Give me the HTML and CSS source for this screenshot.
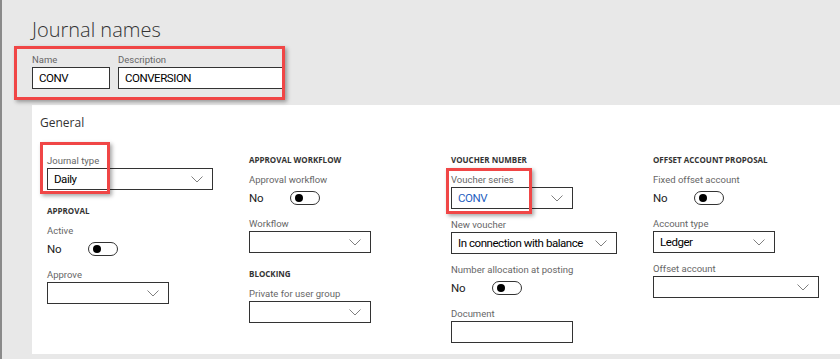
FILE: index.html
```html
<!DOCTYPE html>
<html lang="en">
<head>
  <meta charset="UTF-8">
  <title>Journal names</title>
  <link rel="stylesheet" href="styles.css">
</head>
<body>
  <div class="page">
    <h1 class="title">Journal names</h1>

    <div class="ident">
      <div class="field">
        <div class="lbl">Name</div>
        <div class="box w-name">CONV</div>
      </div>
      <div class="field">
        <div class="lbl">Description</div>
        <div class="box w-desc">CONVERSION</div>
      </div>
      <span class="mark mark-ident"></span>
    </div>

    <section class="panel">
      <h2 class="panel-title">General</h2>
      <div class="cols">

        <div class="col">
          <div class="field">
            <div class="lbl">Journal type</div>
            <div class="box dd w-wide"><span>Daily</span><svg class="chev" width="12" height="7" viewBox="0 0 12 7"><path d="M0.5 0.5l5.5 5.5 5.5-5.5"/></svg></div>
            <span class="mark mark-jtype"></span>
          </div>
          <div class="group">
            <h3 class="head">Approval</h3>
            <div class="field">
              <div class="lbl">Active</div>
              <div class="toggle-row"><span>No</span><span class="toggle"></span></div>
            </div>
            <div class="field">
              <div class="lbl">Approve</div>
              <div class="box dd w-std"><span></span><svg class="chev" width="12" height="7" viewBox="0 0 12 7"><path d="M0.5 0.5l5.5 5.5 5.5-5.5"/></svg></div>
            </div>
          </div>
        </div>

        <div class="col">
          <h3 class="head">Approval workflow</h3>
          <div class="field">
            <div class="lbl">Approval workflow</div>
            <div class="toggle-row"><span>No</span><span class="toggle"></span></div>
          </div>
          <div class="field">
            <div class="lbl">Workflow</div>
            <div class="box dd w-std"><span></span><svg class="chev" width="12" height="7" viewBox="0 0 12 7"><path d="M0.5 0.5l5.5 5.5 5.5-5.5"/></svg></div>
          </div>
          <div class="group">
            <h3 class="head">Blocking</h3>
            <div class="field">
              <div class="lbl">Private for user group</div>
              <div class="box dd w-std"><span></span><svg class="chev" width="12" height="7" viewBox="0 0 12 7"><path d="M0.5 0.5l5.5 5.5 5.5-5.5"/></svg></div>
            </div>
          </div>
        </div>

        <div class="col">
          <h3 class="head">Voucher number</h3>
          <div class="field">
            <div class="lbl">Voucher series</div>
            <div class="box dd w-std"><span class="link">CONV</span><svg class="chev" width="12" height="7" viewBox="0 0 12 7"><path d="M0.5 0.5l5.5 5.5 5.5-5.5"/></svg></div>
            <span class="mark mark-voucher"></span>
          </div>
          <div class="field">
            <div class="lbl">New voucher</div>
            <div class="box dd w-wide"><span>In connection with balance</span><svg class="chev" width="12" height="7" viewBox="0 0 12 7"><path d="M0.5 0.5l5.5 5.5 5.5-5.5"/></svg></div>
          </div>
          <div class="field">
            <div class="lbl">Number allocation at posting</div>
            <div class="toggle-row"><span>No</span><span class="toggle"></span></div>
          </div>
          <div class="field">
            <div class="lbl">Document</div>
            <div class="box w-std"></div>
          </div>
        </div>

        <div class="col">
          <h3 class="head">Offset account proposal</h3>
          <div class="field">
            <div class="lbl">Fixed offset account</div>
            <div class="toggle-row"><span>No</span><span class="toggle"></span></div>
          </div>
          <div class="field">
            <div class="lbl">Account type</div>
            <div class="box dd w-std"><span>Ledger</span><svg class="chev" width="12" height="7" viewBox="0 0 12 7"><path d="M0.5 0.5l5.5 5.5 5.5-5.5"/></svg></div>
          </div>
          <div class="field">
            <div class="lbl">Offset account</div>
            <div class="box dd w-wide"><span></span><svg class="chev" width="12" height="7" viewBox="0 0 12 7"><path d="M0.5 0.5l5.5 5.5 5.5-5.5"/></svg></div>
          </div>
        </div>

      </div>
    </section>
  </div>
</body>
</html>
```

FILE: styles.css
```css
:root {
  --red: #f04646;
  --ink: #222;
  --label: #666;
}

body {
  margin: 0;
  height: 359px;
  box-sizing: border-box;
  overflow: hidden;
  background-color: #e8e8e8;
  border-left: 2px solid #8a8a8a;
  font-family: 'Roboto', 'Open Sans', sans-serif;
  color: var(--ink);
}

.page { padding-left: 30px; }

.title {
  margin: 0;
  padding-top: 17px;
  font-family: 'Open Sans', sans-serif;
  font-size: 20px;
  line-height: 26px;
  font-weight: 300;
  color: #333;
}

/* name / description row */
.ident {
  position: relative;
  display: flex;
  gap: 8px;
  margin-top: 10px;
}

.w-name { width: 78px; }
.w-desc { width: 166px; }
.w-std { width: 122px; }
.w-wide { width: 166px; }

.field { position: relative; }

.lbl {
  font-size: 9.5px;
  line-height: 14px;
  color: var(--label);
  white-space: nowrap;
}

.box {
  box-sizing: border-box;
  height: 22px;
  border: 1px solid #333;
  background: #fff;
  padding: 0 6px;
  font-size: 11.5px;
  line-height: 20px;
  letter-spacing: -0.45px;
  color: #000;
  white-space: nowrap;
}

.dd {
  display: flex;
  align-items: center;
  justify-content: space-between;
  padding-right: 9px;
}

.chev {
  flex: none;
  fill: none;
  stroke: #808080;
  stroke-width: 1;
}

.link { color: #1f5fbf; }

/* general panel */
.panel {
  margin-top: 16px;
  height: 249px;
  background: #fff;
  padding: 8px 0 0 8px;
  box-sizing: border-box;
}

.panel-title {
  margin: 0;
  font-family: 'Open Sans', sans-serif;
  font-size: 12px;
  line-height: 20px;
  font-weight: 400;
  color: #333;
}

.cols {
  display: grid;
  grid-template-columns: repeat(4, 202px);
  margin: 21px 0 0 7px;
}

.col .field { margin-bottom: 9px; }

.group { margin-top: 15px; }

.head {
  margin: 0 0 7px;
  font-family: 'Open Sans', sans-serif;
  font-size: 8px;
  line-height: 12px;
  font-weight: 700;
  text-transform: uppercase;
  color: #333;
}

.toggle-row {
  display: flex;
  align-items: center;
  height: 21px;
  font-size: 11.5px;
  letter-spacing: -0.3px;
  color: var(--ink);
}

.toggle-row span:first-child { width: 41px; }

.toggle {
  position: relative;
  box-sizing: border-box;
  width: 30px;
  height: 14px;
  border: 1px solid #333;
  border-radius: 7px;
}

.toggle::after {
  content: '';
  position: absolute;
  left: 4px;
  top: 2px;
  width: 8px;
  height: 8px;
  border-radius: 50%;
  background: #000;
}

/* red annotation frames */
.mark {
  position: absolute;
  box-sizing: border-box;
  border: 3px solid var(--red);
  box-shadow: 2px 2px 4px rgba(0, 0, 0, 0.35);
  pointer-events: none;
}

.mark-ident { left: -18px; top: -7px; width: 271px; height: 54px; }
.mark-jtype { left: -7px; top: -12px; width: 70px; height: 52px; }
.mark-voucher { left: -5px; top: -5px; width: 86px; height: 46px; }
```
